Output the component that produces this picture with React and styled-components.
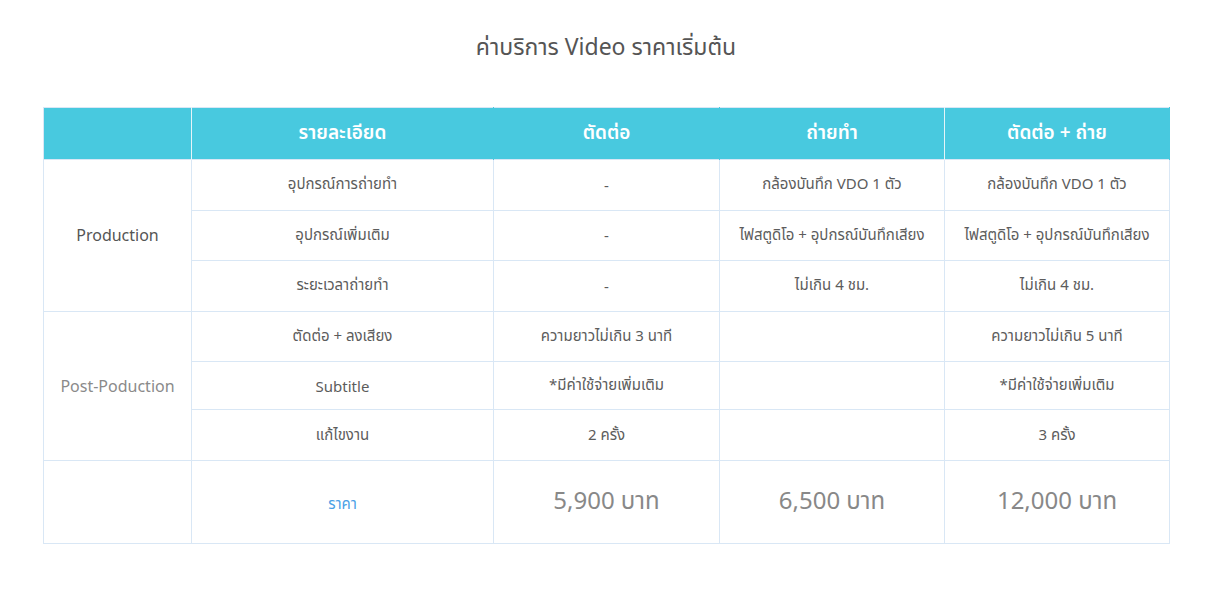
import styled, { createGlobalStyle } from "styled-components";

const GlobalStyle = createGlobalStyle`
  body {
    margin: 0;
    background: #fff;
    font-family: "Noto Sans", "Noto Sans Thai", "Open Sans", sans-serif;
    color: #555;
  }
`;

const rows = [
  { group: "Production", groupSpan: 3, detail: "อุปกรณ์การถ่ายทำ", edit: "-", shoot: "กล้องบันทึก VDO 1 ตัว", both: "กล้องบันทึก VDO 1 ตัว" },
  { detail: "อุปกรณ์เพิ่มเติม", edit: "-", shoot: "ไฟสตูดิโอ + อุปกรณ์บันทึกเสียง", both: "ไฟสตูดิโอ + อุปกรณ์บันทึกเสียง" },
  { detail: "ระยะเวลาถ่ายทำ", edit: "-", shoot: "ไม่เกิน 4 ชม.", both: "ไม่เกิน 4 ชม." },
  { group: "Post-Poduction", groupSpan: 3, light: true, detail: "ตัดต่อ + ลงเสียง", edit: "ความยาวไม่เกิน 3 นาที", shoot: "", both: "ความยาวไม่เกิน 5 นาที" },
  { detail: "Subtitle", edit: "*มีค่าใช้จ่ายเพิ่มเติม", shoot: "", both: "*มีค่าใช้จ่ายเพิ่มเติม", short: true },
  { detail: "แก้ไขงาน", edit: "2 ครั้ง", shoot: "", both: "3 ครั้ง" },
];

export default function App() {
  return (
    <>
      <GlobalStyle />
      <Page>
        <Title>ค่าบริการ Video ราคาเริ่มต้น</Title>
        <PriceTable>
          <colgroup>
            <col style={{ width: 148 }} />
            <col style={{ width: 302 }} />
            <col style={{ width: 226 }} />
            <col style={{ width: 225 }} />
            <col style={{ width: 225 }} />
          </colgroup>
          <thead>
            <tr>
              <HeadCell $split />
              <HeadCell>รายละเอียด</HeadCell>
              <HeadCell>ตัดต่อ</HeadCell>
              <HeadCell $split>ถ่ายทำ</HeadCell>
              <HeadCell>ตัดต่อ + ถ่าย</HeadCell>
            </tr>
          </thead>
          <tbody>
            {rows.map((r, i) => (
              <Row key={i} $short={r.short}>
                {r.group && (
                  <GroupCell rowSpan={r.groupSpan} $light={r.light}>
                    {r.group}
                  </GroupCell>
                )}
                <Cell>{r.detail}</Cell>
                <Cell>{r.edit}</Cell>
                <Cell>{r.shoot}</Cell>
                <Cell>{r.both}</Cell>
              </Row>
            ))}
            <PriceRow>
              <Cell />
              <Cell>
                <PriceLabel>ราคา</PriceLabel>
              </Cell>
              <PriceCell>5,900 บาท</PriceCell>
              <PriceCell>6,500 บาท</PriceCell>
              <PriceCell>12,000 บาท</PriceCell>
            </PriceRow>
          </tbody>
        </PriceTable>
      </Page>
    </>
  );
}

const Page = styled.div`
  padding: 28px 40px 56px 43px;
`;

const Title = styled.h1`
  margin: 0 0 43px;
  text-align: center;
  font-size: 23px;
  font-weight: 400;
  line-height: 36px;
  color: #555;
`;

const PriceTable = styled.table`
  width: 1126px;
  border-collapse: collapse;
  table-layout: fixed;
  border: 1px solid #d9e7f5;
`;

const HeadCell = styled.th`
  height: 51px;
  padding: 0;
  background: #48c9df;
  color: #fff;
  font-size: 19px;
  font-weight: 600;
  text-align: center;
  border: 0;
  border-right: 1px solid ${(p) => (p.$split ? "#e6f4f8" : "#48c9df")};
`;

const Row = styled.tr`
  height: ${(p) => (p.$short ? "48px" : "50.6px")};
`;

const Cell = styled.td`
  padding: 0 8px;
  text-align: center;
  font-size: 15px;
  color: #5c5c5c;
  border: 1px solid #d9e7f5;
`;

const GroupCell = styled(Cell)`
  font-size: 16px;
  color: ${(p) => (p.$light ? "#8a8a8a" : "#555")};
`;

const PriceRow = styled.tr`
  height: 83px;
`;

const PriceLabel = styled.span`
  display: inline-block;
  padding-top: 6px;
  color: #4a9fe6;
  font-size: 15px;
`;

const PriceCell = styled(Cell)`
  font-size: 24px;
  color: #888;
`;
